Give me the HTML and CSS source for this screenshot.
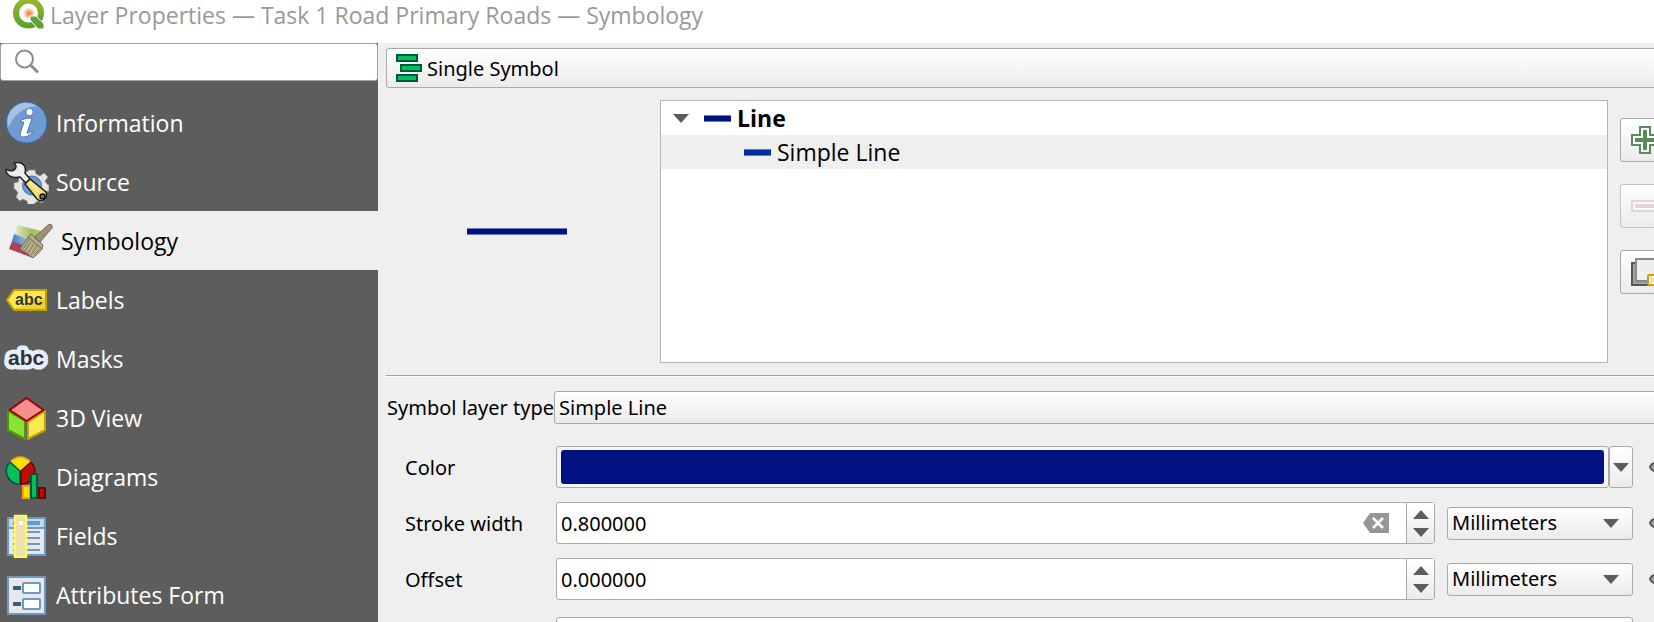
FILE: index.html
```html
<!DOCTYPE html>
<html lang="en">
<head>
<meta charset="utf-8">
<title>Layer Properties — Task 1 Road Primary Roads — Symbology</title>
<link rel="stylesheet" href="styles.css">
</head>
<body>
<header class="titlebar">
  <svg class="logo" width="34" height="32" viewBox="0 0 34 32" aria-hidden="true">
    <defs><linearGradient id="q" x1="0" y1="0" x2="0" y2="1"><stop offset="0" stop-color="#96b62b"/><stop offset="1" stop-color="#5ba12f"/></linearGradient>
    <radialGradient id="o"><stop offset="0" stop-color="#ee7a3a"/><stop offset="0.4" stop-color="#f6a86c"/><stop offset="1" stop-color="#fffaf0"/></radialGradient></defs>
    <circle cx="16.500" cy="14" r="12.500" fill="none" stroke="url(#q)" stroke-width="6"/>
    <circle cx="17" cy="14.500" r="6" fill="url(#o)"/>
    <path d="M18 17h6l8 8v5h-6l-8-9z" fill="#5fa437" stroke="#fff" stroke-width="1"/>
  </svg>
  <h1 class="title">Layer Properties — Task 1 Road Primary Roads — Symbology</h1>
</header>
<div class="body">
  <aside class="sidebar">
    <label class="search">
      <svg width="26" height="26" viewBox="0 0 26 26" fill="none" stroke="#8c8c8c" aria-hidden="true"><circle cx="9.500" cy="10" r="8.500" stroke-width="2"/><path d="M16 16.500L23 23.500" stroke-width="3"/></svg>
      <input class="search-input" type="text" aria-label="Search">
    </label>
    <nav class="nav">
      <a class="item" href="#">
        <svg width="44" height="44" viewBox="0 0 44 44" aria-hidden="true"><circle cx="21.500" cy="21.500" r="20.500" fill="#6e9cd2" stroke="#3a63a8"/><path d="M3.500 26A18.500 18.500 0 0 1 31.500 5C18 6 9 14 3.500 26z" fill="#a5c1e4"/><circle cx="24.500" cy="11" r="3.700" fill="#fff" stroke="#3a63a8" stroke-width=".8"/><path d="M16 19q5-2 11-2l-5 15q1 1 5-2v2q-5 5-10 4-3-1-1-6l3-9h-3z" fill="#fff" stroke="#3a63a8" stroke-width=".8"/></svg>
        Information</a>
      <a class="item" href="#">
        <svg width="44" height="44" viewBox="0 0 44 44" aria-hidden="true"><g fill="#e4e4e4" stroke="#8c8c8c" stroke-width=".6"><path d="M24 10h6l1 4 4 2 4-3 4 4-3 4 2 3 2 1v6l-4 1-2 4 3 3-4 4-4-2-3 2-1 2h-6l-1-4-4-2-3 2-4-4 2-4-2-3-2-1v-6l4-1 1-3-2-4 4-4 4 2 3-2z"/></g><circle cx="27" cy="25.500" r="9.500" fill="#6a97cf" stroke="#4570ae"/><path d="M9 3q8-2 11 4 1 3 0 6l5 6-4 4-6-6q-4 1-8 0-6-2-6-8 4 3 8 1 4-3 0-7z" fill="#eceeec" stroke="#222" stroke-width="1.500" stroke-linejoin="round"/><path d="M20 24l5-5 16 13q2 6-4 9-3 0-5-2z" fill="#f4db75" stroke="#222" stroke-width="1.500"/><path d="M24 22l12 12" stroke="#fff0a8" stroke-width="1.500"/><circle cx="37.500" cy="36.500" r="2.500" fill="#777" stroke="#111" stroke-width="1.500"/></svg>
        Source</a>
      <a class="item active" href="#" aria-current="page">
        <svg width="44" height="44" viewBox="0 0 44 44" aria-hidden="true"><defs><linearGradient id="pg" x1="0" x2="1"><stop offset="0" stop-color="#e4ebd6"/><stop offset=".6" stop-color="#a8c068"/></linearGradient><linearGradient id="pb" x1="0" x2="1"><stop offset="0" stop-color="#3f82c8"/><stop offset="1" stop-color="#b8d4ea"/></linearGradient></defs><path d="M9 6l23 6-7 14L5 15z" fill="url(#pg)"/><path d="M5 15l20 8-4 9L3 22z" fill="url(#pb)"/><path d="M3 22l15 6 6 11L0 30z" fill="#ab4261"/><path d="M26 18L39 6q5-2 4 3L31 23z" fill="#9b9474" stroke="#706a50"/><path d="M22 15q3 2 4 4 4 3 8 7l-1 4-14-12z" fill="#b5ae8c" stroke="#706a50"/><path d="M19 18l14 12q-4 5-9 9-7-6-13-9z" fill="#b8ae88" stroke="#746d54"/><path d="M20 20l-6 10M22 22l-6 10M25 25l-6 9M28 27l-6 9M31 30l-6 6" stroke="#7c765d"/></svg>
        Symbology</a>
      <a class="item" href="#">
        <svg width="44" height="44" viewBox="0 0 44 44" aria-hidden="true"><path d="M2 22L9 12h32v20H9z" fill="#fce94f" stroke="#c4a000" stroke-width="2"/><path d="M9 31h31V20z" fill="#f0d22c"/><text class="abc-label" x="10" y="27">abc</text></svg>
        Labels</a>
      <a class="item" href="#">
        <svg class="mask" width="44" height="44" viewBox="0 0 44 44" aria-hidden="true"><text class="abc-mask" x="3" y="28">abc</text></svg>
        Masks</a>
      <a class="item" href="#">
        <svg width="44" height="44" viewBox="0 0 44 44" aria-hidden="true"><g stroke-width="2" stroke-linejoin="round"><path d="M3 15l17 10v18L3 34z" fill="#8ae234" stroke="#4e9a06"/><path d="M40 15L23 26v17l17-9z" fill="#fce94f" stroke="#c4a000"/><path d="M21.500 2l17 12-17 11L4.500 14z" fill="#f68f8f" stroke="#a40000"/></g></svg>
        3D View</a>
      <a class="item" href="#">
        <svg width="44" height="44" viewBox="0 0 44 44" aria-hidden="true"><g stroke-width="1.500"><path d="M15.500 16L5 7q10-10 21 0z" fill="#ffde00" stroke="#f2a01c"/><path d="M15 16v13A13 13 0 0 1 5 7z" fill="#00bf5c" stroke="#00573c"/><path d="M16 16v13A13 13 0 0 0 26 7z" fill="#c00d00" stroke="#640900"/><path d="M18 31h7v12h-7z" fill="#ffde00" stroke="#f2a01c" stroke-width="2"/><path d="M34 33h6v10h-6z" fill="#c00d00" stroke="#640900" stroke-width="2"/><path d="M26 19h6v24h-6z" fill="#00bf5c" stroke="#00573c" stroke-width="2"/></g></svg>
        Diagrams</a>
      <a class="item" href="#">
        <svg width="44" height="44" viewBox="0 0 44 44" aria-hidden="true"><path d="M3 4h37v37H3z" fill="#e8e8e8" stroke="#6d97c4" stroke-width="2"/><path d="M4 5h35v9H4z" fill="#bbdcf4"/><path d="M3 14h37" stroke="#6d97c4"  stroke-width="2"/><path d="M8 9h27" stroke="#6d97c4" stroke-width="4"/><path d="M8 18h27M8 24h27M8 30h27M8 36h27" stroke="#6d97c4" stroke-width="2"/><path d="M10 2h11v41H10z" fill="#ece0b2" stroke="#fff95c" stroke-width="2.500"/><path d="M14 7h4v4h-4z" fill="#fff"/></svg>
        Fields</a>
      <a class="item" href="#">
        <svg width="44" height="44" viewBox="0 0 44 44" aria-hidden="true"><path d="M3 4h37v37H3z" fill="#e8e8e8" stroke="#6d97c4" stroke-width="2"/><path d="M8 15h8M8 31h8" stroke="#415a75" stroke-width="4"/><rect x="18" y="10" width="17" height="10" rx="1" fill="#fcffff" stroke="#6d97c4" stroke-width="2"/><rect x="18" y="26" width="17" height="10" rx="1" fill="#fcffff" stroke="#6d97c4" stroke-width="2"/></svg>
        Attributes Form</a>
    </nav>
  </aside>
  <main class="main">
    <button class="renderer" type="button">
      <svg width="26" height="28" viewBox="0 0 26 28" fill="#00bf5c" stroke="#00573c" stroke-width="2" aria-hidden="true"><path d="M1 1h20v6H1zM5 11h20v6H5zM1 21h20v6H1z"/></svg>
      <span class="renderer-name">Single Symbol</span>
    </button>
    <section class="symbol">
      <div class="preview"><div class="preview-line"></div></div>
      <ul class="tree">
        <li class="node root"><svg class="caret" width="16" height="9" viewBox="0 0 16 9" aria-hidden="true"><path d="M0 0h16L8 9z"/></svg><span class="swatch"></span>Line</li>
        <li class="node child"><span class="swatch light"></span>Simple Line</li>
      </ul>
      <div class="tools">
        <button class="tool" type="button" aria-label="Add symbol layer"><svg width="28" height="28" viewBox="0 0 28 28" aria-hidden="true"><path d="M9 1h10v8h8v10h-8v8H9v-8H1V9h8z" fill="#fff" stroke="#5a8c5a" stroke-width="2"/><path d="M14 4v20M4 14h20" stroke="#5a8c5a" stroke-width="4"/></svg></button>
        <button class="tool off" type="button" disabled aria-label="Remove symbol layer"><svg width="28" height="28" viewBox="0 0 28 28" aria-hidden="true"><path d="M1 9h26v10H1z" fill="#fbf8f8" stroke="#e0d6d6" stroke-width="2"/><path d="M4 14h20" stroke="#e0d6d6" stroke-width="4"/></svg></button>
        <button class="tool" type="button" aria-label="Duplicate symbol layer"><svg width="28" height="28" viewBox="0 0 28 28" aria-hidden="true"><path d="M1 5h22v22H1z" fill="#a2a49c" stroke="#555753" stroke-width="2"/><path d="M5 1h22v22H5z" fill="#eeeeec" stroke="#888a85" stroke-width="2"/><rect x="17" y="17" width="12" height="10" rx="1" fill="#fff" stroke="#c4a000" stroke-width="2"/><path d="M18 18l8 8M26 18l-8 8" stroke="#ecdc90" stroke-width="2"/></svg></button>
      </div>
    </section>
    <section class="form">
      <div class="type-row">
        <label class="type-label" for="type">Symbol layer type</label>
        <select class="select type-select" id="type"><option>Simple Line</option></select>
      </div>
      <div class="row">
        <label class="label" for="color">Color</label>
        <div class="color">
          <button class="color-button" id="color" type="button" aria-label="Color"><span class="fill"></span></button>
          <button class="color-menu" type="button" aria-label="Color menu"><svg class="caret" width="16" height="9" viewBox="0 0 16 9" aria-hidden="true"><path d="M0 0h16L8 9z"/></svg></button>
        </div>
        <button class="override" type="button" aria-label="Color override"><svg width="26" height="20" viewBox="0 0 26 20" aria-hidden="true"><path d="M1 10q1-3 4-4h9v8H5q-3-1-4-4z" fill="#a0a0a0" stroke="#555" stroke-width="2"/></svg></button>
      </div>
      <div class="row">
        <label class="label" for="width">Stroke width</label>
        <div class="spin">
          <input class="value" id="width" type="text" value="0.800000">
          <button class="clear" type="button" aria-label="Clear"><svg width="28" height="20" viewBox="0 0 28 20" aria-hidden="true"><path d="M1 10l7-10h19v20H8z" fill="#969696"/><path d="M11 5l10 10M21 5L11 15" stroke="#fff" stroke-width="2.500"/></svg></button>
          <div class="steps">
            <button class="step" type="button" aria-label="Increase"><svg class="caret" width="16" height="9" viewBox="0 0 16 9" aria-hidden="true"><path d="M0 9h16L8 0z"/></svg></button>
            <button class="step" type="button" aria-label="Decrease"><svg class="caret" width="16" height="9" viewBox="0 0 16 9" aria-hidden="true"><path d="M0 0h16L8 9z"/></svg></button>
          </div>
        </div>
        <div class="unit">
          <select class="select" aria-label="Stroke width unit"><option>Millimeters</option></select>
          <svg class="caret unit-caret" width="16" height="9" viewBox="0 0 16 9" aria-hidden="true"><path d="M0 0h16L8 9z"/></svg>
        </div>
        <button class="override" type="button" aria-label="Stroke width override"><svg width="26" height="20" viewBox="0 0 26 20" aria-hidden="true"><path d="M1 10q1-3 4-4h9v8H5q-3-1-4-4z" fill="#a0a0a0" stroke="#555" stroke-width="2"/></svg></button>
      </div>
      <div class="row">
        <label class="label" for="offset">Offset</label>
        <div class="spin">
          <input class="value" id="offset" type="text" value="0.000000">
          <div class="steps">
            <button class="step" type="button" aria-label="Increase"><svg class="caret" width="16" height="9" viewBox="0 0 16 9" aria-hidden="true"><path d="M0 9h16L8 0z"/></svg></button>
            <button class="step" type="button" aria-label="Decrease"><svg class="caret" width="16" height="9" viewBox="0 0 16 9" aria-hidden="true"><path d="M0 0h16L8 9z"/></svg></button>
          </div>
        </div>
        <div class="unit">
          <select class="select" aria-label="Offset unit"><option>Millimeters</option></select>
          <svg class="caret unit-caret" width="16" height="9" viewBox="0 0 16 9" aria-hidden="true"><path d="M0 0h16L8 9z"/></svg>
        </div>
        <button class="override" type="button" aria-label="Offset override"><svg width="26" height="20" viewBox="0 0 26 20" aria-hidden="true"><path d="M1 10q1-3 4-4h9v8H5q-3-1-4-4z" fill="#a0a0a0" stroke="#555" stroke-width="2"/></svg></button>
      </div>
      <div class="row last">
        <span class="label"></span>
        <select class="select style-select" aria-label="Stroke style"><option></option></select>
      </div>
    </section>
  </main>
</div>
</body>
</html>
```

FILE: styles.css
```css
* { box-sizing: border-box; }

body {
  margin: 0;
  height: 100vh;
  overflow: hidden;
  display: flex;
  flex-direction: column;
  background: #fff;
  color: #000;
  font: 23px/30px "Open Sans", "Noto Sans", sans-serif;
}

button, input, select {
  margin: 0;
  font: inherit;
  color: inherit;
}

svg { flex: none; display: block; }

.titlebar {
  flex: none;
  height: 43px;
  padding-left: 12px;
  display: flex;
  gap: 4px;
}

.logo { margin-top: -1px; }

.title {
  margin: 0;
  color: #999;
  font-size: 23px;
  font-weight: 400;
  line-height: 30px;
  white-space: nowrap;
}

.body {
  flex: 1;
  min-height: 0;
  display: flex;
}

.sidebar {
  flex: none;
  width: 378px;
  background: #5d5d5d;
  color: #fff;
}

.search {
  height: 38px;
  padding-left: 14px;
  display: flex;
  align-items: center;
  gap: 8px;
  background: #fff;
  border: 1px solid #a0a0a0;
  border-radius: 3px;
}

.search-input {
  flex: 1;
  min-width: 0;
  border: 0;
  outline: 0;
  background: none;
  color: #000;
}

.nav { padding-top: 12px; }

.item {
  height: 59px;
  padding-left: 5px;
  display: flex;
  align-items: center;
  gap: 7px;
  color: inherit;
  text-decoration: none;
}

.item.active {
  padding-left: 9px;
  gap: 8px;
  background: #efefef;
  color: #000;
}

.mask { overflow: visible; }

.abc-label {
  font: bold 16px "Liberation Sans", sans-serif;
  fill: #2e3436;
}

.abc-mask {
  font: bold 21px "Liberation Sans", sans-serif;
  fill: #2e3436;
  stroke: #e8edfb;
  stroke-width: 9px;
  stroke-linejoin: round;
  paint-order: stroke;
}

.main {
  flex: 1;
  min-width: 0;
  overflow: hidden;
  padding: 5px 0 0 8px;
  background: #efefef;
  font-family: "Noto Sans", sans-serif;
  font-size: 20px;
}

.renderer {
  width: calc(100% + 8px);
  height: 40px;
  padding: 0 9px;
  display: flex;
  align-items: center;
  gap: 5px;
  border: 1px solid #a9a9a9;
  border-radius: 3px;
  background: linear-gradient(#fff, #ebebeb);
}

.renderer-name { padding-top: 2px; }

.symbol {
  height: 288px;
  padding: 12px 0;
  display: flex;
  border-bottom: 1px solid #a0a0a0;
  box-shadow: 0 1px #fff;
}

.preview {
  width: 274px;
  padding-right: 12px;
  display: grid;
  place-items: center;
}

.preview-line {
  width: 100px;
  height: 7px;
  background: #001282;
  border: solid #7078b8;
  border-width: 1px 0;
}

.tree {
  flex: 1;
  margin: 0;
  padding: 0;
  list-style: none;
  background: #fff;
  border: 1px solid #b4b4b4;
  font-family: "Open Sans", sans-serif;
  font-size: 23px;
}

.node {
  height: 34px;
  display: flex;
  align-items: center;
}

.root { padding-left: 12px; font-weight: 700; }
.root .swatch { margin-left: 15px; }
.child { padding-left: 83px; background: #efefef; }

.swatch {
  width: 27px;
  height: 7px;
  margin-right: 6px;
  background: #001282;
  border: solid #7078b8;
  border-width: 1px 0;
}

.light { background: #0030a0; }

.caret { fill: #5d5d5d; }

.tools {
  width: 46px;
  padding: 18px 0 0 12px;
  display: flex;
  flex-direction: column;
  gap: 22px;
}

.tool {
  width: 50px;
  height: 44px;
  padding: 0 10px;
  border: 1px solid #a9a9a9;
  border-radius: 3px;
  background: linear-gradient(#fff, #ebebeb);
}

.tool.off { border-color: #c4c4c4; }

.form { padding-top: 15px; }

.type-row {
  display: flex;
  align-items: center;
  margin-right: -8px;
  white-space: nowrap;
}

.type-label { width: 168px; padding-left: 1px; }

.select {
  appearance: none;
  width: 100%;
  height: 33px;
  padding: 0 4px;
  border: 1px solid #a9a9a9;
  border-radius: 3px;
  background: linear-gradient(#fff, #ebebeb);
}

.type-select { flex: 1; }

.row {
  height: 42px;
  margin-top: 14px;
  padding-left: 19px;
  display: flex;
  align-items: center;
}

.type-row + .row { margin-top: 22px; }

.label { flex: none; width: 151px; padding-top: 2px; }

.color {
  flex: 1;
  height: 42px;
  display: flex;
}

.color-button {
  flex: 1;
  padding: 3px 4px;
  display: flex;
  border: 1px solid #a9a9a9;
  border-radius: 3px;
  background: #f6f6f6;
}

.color-button .fill {
  flex: 1;
  align-self: stretch;
  border-radius: 3px;
  background: #001282;
}

.color-menu {
  width: 24px;
  padding: 0;
  display: grid;
  place-items: center;
  border: 1px solid #a9a9a9;
  border-radius: 3px;
  background: linear-gradient(#fff, #ebebeb);
}

.spin {
  flex: 1;
  height: 42px;
  display: flex;
  align-items: center;
  background: #fff;
  border: 1px solid #a9a9a9;
  border-radius: 3px;
}

.value {
  flex: 1;
  min-width: 0;
  padding: 2px 4px 0;
  border: 0;
  outline: 0;
  background: none;
}

.clear {
  margin-right: 16px;
  padding: 0;
  border: 0;
  background: none;
}

.steps {
  align-self: stretch;
  width: 28px;
  display: grid;
  align-content: center;
  gap: 9px;
  border-left: 1px solid #a9a9a9;
  background: linear-gradient(#fff, #ebebeb);
}

.step {
  padding: 0;
  display: grid;
  place-items: center;
  border: 0;
  background: none;
}

.unit {
  position: relative;
  width: 186px;
  margin-left: 12px;
  display: flex;
}

.unit-caret {
  position: absolute;
  right: 14px;
  top: 12px;
  pointer-events: none;
}

.override {
  width: 5px;
  margin-left: 16px;
  padding: 0;
  overflow: hidden;
  border: 0;
  background: none;
}

.style-select { flex: 1; height: 42px; }
.last { margin-top: 17px; padding-right: 21px; }
```
